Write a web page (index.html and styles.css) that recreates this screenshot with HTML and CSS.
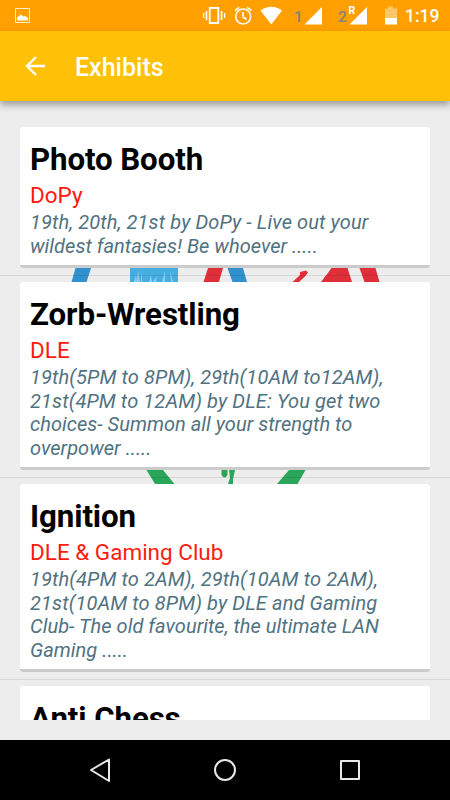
FILE: index.html
```html
<!DOCTYPE html>
<html lang="en">
<head>
<meta charset="utf-8">
<title>Exhibits</title>
<link rel="stylesheet" href="styles.css">
</head>
<body>
<div class="screen">
  <div class="status">
    <svg class="status-icons" width="400" height="31" viewBox="0 0 400 31" fill="#fff">
      <path d="M15.5 8.5h14v14h-14z" fill="none" stroke="#fff" stroke-opacity=".8"/>
      <path d="M17 20.500v-3l2-1.500 2-1.500 2 2 2-.5 3 2v2.500z"/>
      <path d="M209.700 8h8.600v15h-8.600z" fill="none" stroke="#fff" stroke-width="1.8"/>
      <path d="M203 13h1.300v5H203zM205.600 11h1.700v9h-1.700zM220.700 11h1.700v9h-1.700zM223.900 13h1.400v5h-1.400z"/>
      <g fill="none" stroke="#fff" stroke-width="1.6"><circle cx="243.2" cy="16.5" r="7.5"/><path d="M243 12v5l3.500 2.200M235 10.700l4.200-3.400M251.500 10.700l-4.300-3.400"/></g>
      <path d="M260.500 10.500Q271.300 3 282 10.500L271.300 24.500zM322 7v17.500h-17.500zM367 7v17.500h-17.500z"/>
      <path d="M388 8.500v-2h5v2h4v9.500h-12V8.500z" transform="translate(0 0)" fill-opacity=".4"/><path d="M385 18h12v6.500h-12z"/>
    </svg>
    <span class="sim sim-one">1</span>
    <span class="sim sim-two">2</span>
    <span class="roaming">R</span>
    <span class="clock">1:19</span>
  </div>
  <header class="appbar">
    <svg width="22" height="22" viewBox="0 0 22 22" fill="none" stroke="#fff" stroke-width="2.4"><path d="M21 11H3M12 2L3 11l9 9"/></svg>
    <h1>Exhibits</h1>
  </header>
  <main class="content">
    <svg class="backdrop" width="450" height="619" viewBox="0 101 450 619">
      <path d="M75.500 268h15.500l-4.500 14H71.500zM227.500 268h15.500l4 14h-14.500z" fill="#3190cd"/>
      <path d="M130 268h48v14h-48z" fill="#46ade0"/>
      <path d="M134 282l2-8 1 8zM137 282l1-12 2 12zM141 282v-12l1.500 12zM149 282l2-7 1 7zM153 282l4-6-1 6zM162 282l3-11v11zM171 282l-1-12 3 12z" fill="#8dccef"/>
      <path d="M208 268h15l-4 14h-15.500zM321.500 282l3.500-5 6.500-9h16l4.500 14zM359.500 268h16l4 14h-15z" fill="#df303a"/>
      <path d="M321 282l5-6.500h4v6.500z" fill="#df303a"/>
      <path d="M292.500 282l7.500-7v-3l6-1.500 2 2-3 4-6 5.500z" fill="#df303a"/>
      <path d="M146.500 470H163l11.500 14H155zM289 470h16.500l-8 14H277zM221.500 470h6v5q-3 5-6 0zM229 470h6l-2 9v5h-5l2-6z" fill="#29a65a"/>
    </svg>
    <div class="list">
      <section class="item"><article class="card">
        <h2>Photo Booth</h2>
        <p class="club">DoPy</p>
        <p class="desc"><span class="wide">19th, 20th, 21st by DoPy - Live out your</span><br>wildest fantasies! Be whoever .....</p>
      </article></section>
      <section class="item"><article class="card">
        <h2>Zorb-Wrestling</h2>
        <p class="club">DLE</p>
        <p class="desc"><span class="wide">19th(5PM to 8PM), 29th(10AM to12AM),</span><br><span class="wide">21st(4PM to 12AM) by DLE: You get two</span><br>choices- Summon all your strength to<br>overpower .....</p>
      </article></section>
      <section class="item"><article class="card">
        <h2>Ignition</h2>
        <p class="club">DLE &amp; Gaming Club</p>
        <p class="desc"><span class="wide">19th(4PM to 2AM), 29th(10AM to 2AM),</span><br><span class="wide">21st(10AM to 8PM) by DLE and Gaming</span><br>Club- The old favourite, the ultimate LAN<br>Gaming .....</p>
      </article></section>
      <section class="item"><article class="card">
        <h2>Anti Chess</h2>
      </article></section>
    </div>
  </main>
  <nav class="navbar">
    <svg width="450" height="60" viewBox="0 0 450 60" fill="none" stroke="#e8e8e8" stroke-width="2" stroke-linejoin="round"><path d="M109 19.500v21.500L91 30z"/><circle cx="225" cy="30" r="10"/><path d="M341 21h18v18h-18z"/></svg>
  </nav>
</div>
</body>
</html>
```

FILE: styles.css
```css
* { box-sizing: border-box; margin: 0; padding: 0; }
body { font-family: Roboto, sans-serif; background: #ededed; }
.screen { width: 450px; height: 800px; display: flex; flex-direction: column; overflow: hidden; background: #ededed; }
.status { position: relative; height: 31px; flex: none; background: #ffa000; color: #fff; }
.status-icons { display: block; }
.status span { position: absolute; line-height: 20px; font-weight: 500; }
.status .sim { top: 7px; font-size: 15.5px; color: #858078; }
.sim-one { left: 294px; }
.sim-two { left: 338px; }
.status .roaming { left: 348.5px; top: 1px; font-size: 10.5px; font-weight: 700; }
.status .clock { right: 10.5px; top: 6px; font-size: 17.5px; }
.appbar { position: relative; z-index: 1; flex: none; height: 70px; display: flex; align-items: center; padding-left: 24px; gap: 29px; background: #ffc107; color: #fff; box-shadow: 0 4px 7px rgba(0, 0, 0, .34); }
.appbar h1 { font-size: 25px; font-weight: 500; line-height: 30px; padding-top: 4px; }
.content { position: relative; height: 619px; flex: none; overflow: hidden; }
.backdrop { position: absolute; left: 0; top: 0; }
.list { position: relative; padding-top: 20px; }
.item { padding: 6px 20px 7px; border-bottom: 1px solid rgba(0, 0, 0, .09); height: 202px; }
.item:first-child { height: 155px; }
.card { height: 100%; background: #fff; border-radius: 3px; border-bottom: 3px solid #cbcbcb; padding: 14px 10px 0; }
.card h2 { font-size: 31.25px; line-height: 37px; font-weight: 700; letter-spacing: -.1px; color: #000; white-space: nowrap; }
.club { font-size: 22.5px; line-height: 26px; margin-top: 4px; color: #ff1a0d; }
.desc { margin-top: 3px; font-size: 20px; line-height: 23.7px; font-style: italic; color: #507281; white-space: nowrap; letter-spacing: .03px; }
.wide { letter-spacing: .12px; }
.navbar { height: 60px; flex: none; margin-top: auto; background: #000; }
.navbar svg { display: block; }
```
